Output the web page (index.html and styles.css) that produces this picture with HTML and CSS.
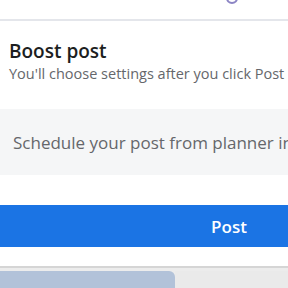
FILE: index.html
```html
<!DOCTYPE html>
<html lang="en">

<head>
    <meta charset="UTF-8">
    <meta name="viewport" content="width=device-width, initial-scale=1.0">
    <title>Boost post</title>
    <link rel="stylesheet" href="styles.css">
</head>

<body>
    <div class="top">
        <span class="avatar"></span>
    </div>

    <div class="dialog">
        <div class="boost">
            <h2>Boost post</h2>
            <p>You'll choose settings after you click Post</p>
        </div>

        <div class="schedule">
            <span>Schedule your post from planner instead</span>
        </div>

        <div class="actions">
            <button class="post">Post</button>
        </div>
    </div>

    <div class="below">
        <div class="card"></div>
        <div class="rest"></div>
    </div>
</body>

</html>
```

FILE: styles.css
```css
* {
    margin: 0;
    padding: 0;
    box-sizing: border-box;
    font-family: "Open Sans", "Noto Sans", sans-serif;
}

body {
    width: 288px;
    height: 288px;
    overflow: hidden;
    background-color: #fff;
}

div.top {
    height: 21px;
    border-bottom: 2px solid #e4e6eb;
    display: flex;
    justify-content: flex-end;
    padding-right: 50px;
}

span.avatar {
    display: block;
    width: 12px;
    height: 12px;
    margin-top: -8px;
    border-radius: 50%;
    border: 2px solid #8b84c4;
}

div.dialog {
    display: flex;
    flex-direction: column;
}

div.boost {
    padding: 18px 0 0 9px;
    white-space: nowrap;
}

div.boost h2 {
    font-size: 19px;
    font-weight: 600;
    color: #1c1e21;
    line-height: 25px;
}

div.boost p {
    font-size: 14.5px;
    color: #65676b;
    line-height: 20px;
}

div.schedule {
    margin-top: 25px;
    height: 66px;
    background-color: #f5f6f7;
    display: flex;
    align-items: center;
    padding-left: 13px;
    white-space: nowrap;
    overflow: hidden;
}

div.schedule span {
    font-size: 17px;
    color: #65676b;
}

div.actions {
    margin-top: 30px;
    height: 61px;
}

button.post {
    display: block;
    width: 100%;
    height: 42px;
    border: none;
    background-color: #1b74e4;
    color: #fff;
    font-size: 17px;
    font-weight: 600;
    padding-left: 170px;
}

div.below {
    display: flex;
    height: 22px;
    border-top: 2px solid #d5d5d5;
    background-color: #ececec;
    padding-top: 3px;
}

div.card {
    width: 175px;
    background-color: #b2c2d9;
    border-top-right-radius: 6px;
}

div.rest {
    flex: 1;
    background-color: #eaeaea;
}
```
